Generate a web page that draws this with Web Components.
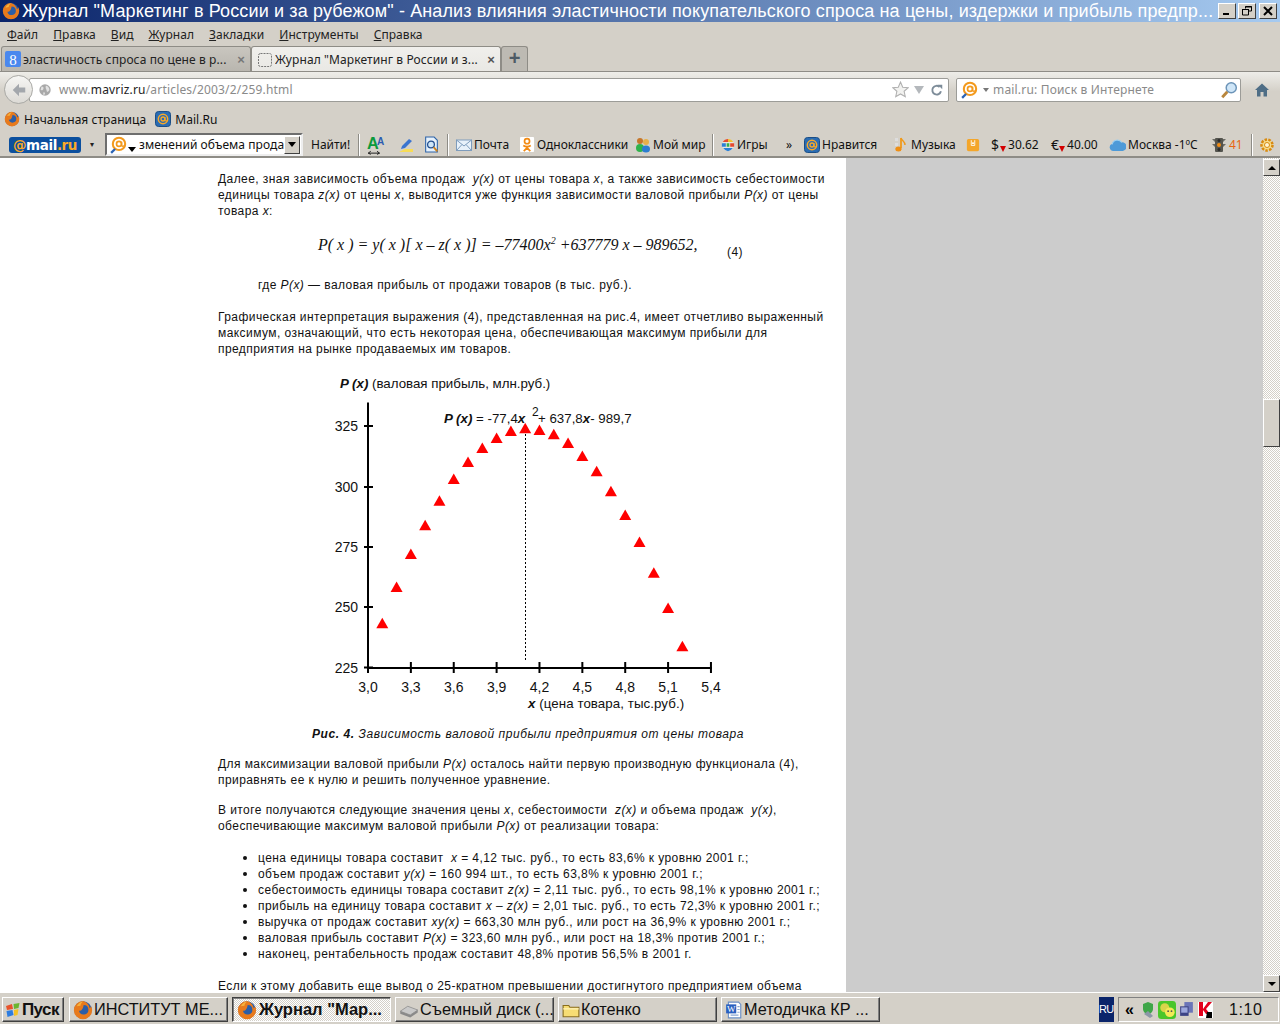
<!DOCTYPE html>
<html lang="ru">
<head>
<meta charset="utf-8">
<title>Журнал</title>
<style>
  html, body { margin: 0; height: 1024px; overflow: hidden; background: #d4d0c8; }
  body { display: flex; flex-direction: column; font-family: "Liberation Sans", Arial, sans-serif; }
</style>
</head>
<body>
<win-titlebar></win-titlebar>
<menu-bar></menu-bar>
<tab-strip></tab-strip>
<nav-bar></nav-bar>
<bookmark-bar></bookmark-bar>
<mail-toolbar></mail-toolbar>
<page-view></page-view>
<task-bar></task-bar>

<script>
const ICONS = {
  firefox: `<circle cx="8" cy="8" r="7" fill="#2b5ea8"/><path d="M8 .8a7.3 7.3 0 1 0 7.3 7.3c0-1.300-.4-2.500-1-3.400-.1 1-.5 1.500-1 1.800C13 3.900 11 1.500 8 .8zM8.500 4a3.800 3.800 0 1 1-3.700 4.600C6 9 8 8 8.500 4z" fill="#e87a1c"/><path d="M3 5c1-2 3-3.500 5-3.800C6.500 2.500 6 3.500 6 4.500z" fill="#f6b23c"/>`,
  google: `<rect x="0" y="0" width="16" height="16" rx="2" fill="#4a88ee"/><text x="8" y="13.500" font-family="Liberation Serif" font-size="15" fill="#fff" text-anchor="middle">8</text>`,
  dashed: `<rect x="1.500" y="1.500" width="13" height="13" rx="2" fill="none" stroke="#777" stroke-dasharray="2 1"/>`,
  globe: `<circle cx="8" cy="8" r="6.500" fill="#a9a9a9"/><path d="M4 4c2 0 3 1 2 3S3 8 3 8zM9 3c2 0 4 2 4 5-1 2-3 3-3 1s-2-3-1-6zM6 11c1-1 2 0 2 1l-1 2c-1 0-1-2-1-3z" fill="#e2e2e2"/>`,
  back: `<path d="M3 8l5-5v3h5v4H8v3z" fill="#a3a7ac"/>`,
  star: `<polygon points="8,1 10.100,5.800 15.300,6.300 11.400,9.700 12.500,14.800 8,12.200 3.500,14.800 4.600,9.700 .7,6.300 5.900,5.800" fill="#f2f2f0" stroke="#b0b0b0"/>`,
  reload: `<path d="M12.500 9.500A5 5 0 1 1 11 4.500" fill="none" stroke="#7d8c99" stroke-width="2.200"/><path d="M9 2h5v5z" fill="#7d8c99"/>`,
  at: `<circle cx="8" cy="7" r="5.500" fill="none" stroke="#f39a1d" stroke-width="1.800"/><circle cx="8" cy="7" r="2.200" fill="none" stroke="#f39a1d" stroke-width="1.500"/><path d="M10.300 5v3c0 1.500 2 1.500 2.800 0" fill="none" stroke="#f39a1d" stroke-width="1.300"/><path d="M4.500 11.500L1 15" stroke="#2a63b5" stroke-width="2"/>`,
  lens: `<circle cx="10" cy="6" r="4.500" fill="#cfe6f8" stroke="#6c94b8" stroke-width="1.300"/><path d="M6.500 9.500L2 14.500" stroke="#b8863c" stroke-width="2.500"/>`,
  home: `<path d="M8 1.500L1 8h2v6.500h3.500V10h3v4.500H13V8h2z" fill="#4f6e86"/>`,
  mailat: `<rect x=".5" y=".5" width="15" height="15" rx="3" fill="#2a6cb3" stroke="#1b4e86"/><circle cx="8" cy="8" r="4.700" fill="none" stroke="#f8a928" stroke-width="1.500"/><circle cx="8" cy="8" r="2" fill="none" stroke="#f8a928" stroke-width="1.300"/><path d="M10 6v3c0 1.300 1.800 1.300 2.700 0" fill="none" stroke="#f8a928" stroke-width="1.100"/>`,
  font: `<text x="0" y="11" font-family="Liberation Sans" font-weight="bold" font-size="13" fill="#0b9a3c">A</text><text x="8" y="8" font-family="Liberation Sans" font-weight="bold" font-size="8" fill="#2c5bb0">A</text><path d="M1 14.500h9M1 14.500l2-1.500M1 14.500l2 1M10 14.500l-2-1.500M10 14.500l-2 1" stroke="#222" stroke-width=".8" fill="none"/>`,
  pen: `<path d="M1 15h14v-3H7z" fill="#f7dc56"/><path d="M3 12l1-3 7-7 3 2-7 7z" fill="#3a74cf"/>`,
  doc: `<path d="M2.500 1h8l3 3v11h-11z" fill="#e6f1fb" stroke="#2d63a8"/><circle cx="7.500" cy="8" r="3.200" fill="#cfe6f8" stroke="#234f8e" stroke-width="1.200"/><path d="M10 10.500l3.500 4" stroke="#c9801f" stroke-width="1.800"/>`,
  mail: `<rect x=".5" y="3" width="15" height="10.500" fill="#e8f1fa" stroke="#7e9cbc"/><path d="M.5 3L8 9l7.500-6M.5 13.500L6 7.500M15.500 13.500L10 7.500" fill="none" stroke="#7e9cbc"/>`,
  ok: `<rect width="15" height="16" rx="1" fill="#fff"/><circle cx="7.500" cy="4.500" r="2.700" fill="none" stroke="#f28a13" stroke-width="1.800"/><path d="M3.500 9c2.500 1.600 5.500 1.600 8 0M7.500 10.500v1M4 15l3.500-3.500L11 15" fill="none" stroke="#f28a13" stroke-width="1.800"/>`,
  myworld: `<circle cx="5" cy="4" r="3" fill="#c6762a"/><circle cx="11" cy="5" r="3" fill="#e7b04a"/><ellipse cx="5" cy="11" rx="4" ry="4" fill="#2fb24b"/><ellipse cx="11" cy="12" rx="4" ry="3.500" fill="#2c7dd1"/>`,
  games: `<circle cx="8" cy="8" r="7" fill="#e7e7e0"/><path d="M8 1a7 7 0 0 0-6 3.500h6z" fill="#e4492f"/><path d="M8 1a7 7 0 0 1 6 3.500H8z" fill="#f2c02c"/><rect x="1" y="6" width="4.500" height="4" fill="#2a7fd6"/><rect x="6.500" y="6" width="3" height="4" fill="#35b04a"/><rect x="10.500" y="6" width="4.500" height="4" fill="#e4492f"/><path d="M2.500 11.500h11A7 7 0 0 1 8 15a7 7 0 0 1-5.500-3.500z" fill="#2a7fd6"/>`,
  note: `<rect x="2" y="1" width="3" height="3" fill="#ddd"/><rect x="2" y="6" width="3" height="3" fill="#ddd"/><rect x="6" y="11" width="3" height="3" fill="#ddd"/><path d="M8 1v10" stroke="#ef9a1c" stroke-width="1.800"/><path d="M8 1c1 3 4 3 4 7" stroke="#ef9a1c" stroke-width="1.500" fill="none"/><ellipse cx="5.500" cy="12" rx="3.200" ry="2.500" fill="#ef8f14"/>`,
  book: `<rect x="1" y="1" width="14" height="14" rx="2" fill="#f4a62a"/><path d="M6 2.500v6h4v-6" fill="none" stroke="#fff"/><rect x="7" y="5" width="2" height="2" fill="#fff"/>`,
  cloud: `<path d="M4 14a3.500 3.500 0 0 1-1-6.800A5 5 0 0 1 12 6a4 4 0 0 1 1 8z" fill="#4e9ad8"/><path d="M3 8a5 5 0 0 1 9-2" fill="none" stroke="#9cd0f2"/>`,
  traffic: `<rect x="4" y="1" width="8" height="14" rx="1" fill="#55554f"/><path d="M4 2H1l3 3M12 2h3l-3 3M4 7H1l3 3M12 7h3l-3 3" fill="#6b6b65"/><circle cx="8" cy="3.500" r="1.500" fill="#2b2b2b"/><circle cx="8" cy="8" r="2" fill="#f28c13"/><circle cx="8" cy="12.500" r="1.500" fill="#2b2b2b"/>`,
  gear: `<circle cx="8" cy="8" r="5.500" fill="#f6dd8c" stroke="#d98a10" stroke-width="2.500" stroke-dasharray="2.500 1.300"/><circle cx="8" cy="8" r="2.500" fill="#fff5d2" stroke="#d98a10"/>`,
  xp: `<path d="M1 4l6-2 1 5-6 1z" fill="#e8532b"/><path d="M8.500 2l6-1-1 5-4.500 1z" fill="#6bb52e"/><path d="M1.500 9l6-1 1 5-6 2z" fill="#2e7de0"/><path d="M9 8l4.500-1-1 6-3.500 1z" fill="#f6c226"/>`,
  disk: `<path d="M1 9l6-4 8 3-6 4z" fill="#c9c9c9" stroke="#888" stroke-width=".6"/><path d="M1 9v2l8 3 6-4V8L9 12z" fill="#8a8a8a"/>`,
  folder: `<path d="M1 4h5l1 1.500h8V14H1z" fill="#f7dd74" stroke="#8a6e1e"/><path d="M1 7h14" stroke="#fff5c2"/>`,
  word: `<path d="M3 1h9l2 2v12H3z" fill="#fff" stroke="#6b8fc5"/><rect x="1" y="3" width="9" height="8" fill="#2a5fc0"/><text x="5.500" y="10" font-family="Liberation Serif" font-size="8" fill="#fff" text-anchor="middle">W</text><path d="M5 12.500h7M11 5h2M11 7.500h2M11 10h2" stroke="#8aa6d2"/>`,
  shield: `<path d="M8 0l5 2v5c0 3-3 5-5 6-2-1-5-3-5-6V2z" fill="#3fa648"/><path d="M4 12l4-3 5 5-3 2z" fill="#8b97a6"/>`,
  chat: `<rect width="16" height="16" rx="3" fill="#4ac62b"/><circle cx="6" cy="6" r="4" fill="#d9d54b"/><circle cx="10.500" cy="10" r="4.300" fill="#f3ea58"/><circle cx="9" cy="9" r=".8" fill="#555"/><circle cx="12" cy="9" r=".8" fill="#555"/>`,
  net: `<rect x="6" y="1" width="8" height="10" fill="#6a74b8"/><rect x="2" y="5" width="8" height="9" fill="#3d4486"/><rect x="3" y="6" width="6" height="5" fill="#9ba6dc"/>`,
  kasper: `<rect x="1" y="0" width="15" height="16" fill="#fff"/><path d="M2 0h4v7l5-7h4l-6 7 4 5H9L6 8v6H2z" fill="#e3001b"/><path d="M10 10h5v6h-6z" fill="#000"/>`
};

class XIcon extends HTMLElement {
  connectedCallback() {
    const size = this.getAttribute('size') || 16;
    this.attachShadow({ mode: 'open' });
    this.shadowRoot.innerHTML = `
      <style>:host { display: inline-flex; flex: none; } svg { display: block; }</style>
      <svg width="${size}" height="${size}" viewBox="0 0 16 16">${ICONS[this.getAttribute('name')] || ''}</svg>`;
  }
}
customElements.define('x-icon', XIcon);

class WinTitlebar extends HTMLElement {
  connectedCallback() {
    this.attachShadow({ mode: 'open' });
    this.shadowRoot.innerHTML = `
      <style>
        :host { display: flex; flex: none; align-items: center; height: 22px; padding-left: 2px;
          background: linear-gradient(90deg, #0a246a, #a6caf0); color: #fff; }
        .t { margin-left: 2px; font: 18px/22px "Liberation Sans", sans-serif; white-space: nowrap; width: 1196px; overflow: hidden; flex: none; letter-spacing: .13px; }
        .b { flex: none; width: 16px; height: 14px; margin-right: 2px; background: #d4d0c8; border: 1px solid; border-color: #fff #404040 #404040 #fff;
          color: #000; display: flex; align-items: center; justify-content: center; }
        svg { display: block; }
      </style>
      <x-icon name="firefox" size="18"></x-icon>
      <div class="t">Журнал "Маркетинг в России и за рубежом" - Анализ влияния эластичности покупательского спроса на цены, издержки и прибыль предпр...</div>
      <div class="b"><svg width="10" height="10"><rect x="1" y="7" width="6" height="2"/></svg></div>
      <div class="b"><svg width="10" height="10"><path d="M3.500 2.500V.5h6v4.500H7M.5 3.500h6V9h-6z" fill="none" stroke="#000"/><path d="M3 1h7M0 3.500h7" stroke="#000"/></svg></div>
      <div class="b" style="margin-left:1px"><svg width="10" height="10"><path d="M1 1l8 8M9 1L1 9" stroke="#000" stroke-width="2"/></svg></div>`;
  }
}
customElements.define('win-titlebar', WinTitlebar);

class MenuBar extends HTMLElement {
  connectedCallback() {
    const items = [['Ф','айл',7],['П','равка',15],['В','ид',15],['Ж','урнал',15],['З','акладки',15],['И','нструменты',15],['С','правка',15]];
    this.attachShadow({ mode: 'open' });
    this.shadowRoot.innerHTML = `
      <style>
        :host { display: flex; flex: none; align-items: center; height: 24px; font: 12px "Noto Sans", sans-serif; letter-spacing: .05px; color: #222; }
        span { white-space: nowrap; } u { text-underline-offset: 1px; }
      </style>
      ${items.map(i => `<span style="margin-left:${i[2]}px"><u>${i[0]}</u>${i[1]}</span>`).join('')}`;
  }
}
customElements.define('menu-bar', MenuBar);

class BrowserTab extends HTMLElement {
  connectedCallback() {
    this.attachShadow({ mode: 'open' });
    this.shadowRoot.innerHTML = `
      <style>
        :host { display: flex; flex: none; align-items: center; box-sizing: border-box; width: 250px; height: 25px; padding: 0 5px 0 3px; gap: 2px;
          background: linear-gradient(#c9c6bf, #b9b6af); border: 1px solid #8e8c86; border-bottom: 0; border-radius: 3px 3px 0 0;
          font: 12px "Noto Sans", sans-serif; letter-spacing: .1px; color: #222; }
        :host([active]) { background: linear-gradient(#f0efec, #e9e8e4); height: 26px; padding-left: 5px; }
        .l { flex: 1; white-space: nowrap; overflow: hidden; min-width: 0; }
        .x { font: bold 13px "Liberation Sans", sans-serif; color: #777; margin-left: 3px; }
        :host([active]) .x { color: #555; }
      </style>
      <slot name="icon"></slot><span class="l"><slot></slot></span><span class="x">×</span>`;
  }
}
customElements.define('browser-tab', BrowserTab);

class TabStrip extends HTMLElement {
  connectedCallback() {
    this.attachShadow({ mode: 'open' });
    this.shadowRoot.innerHTML = `
      <style>
        :host { display: flex; flex: none; align-items: flex-start; height: 25px; padding-left: 1px; }
        .plus { box-sizing: border-box; width: 27px; height: 25px; background: #bdbab3; border: 1px solid #8e8c86; border-bottom: 0;
          border-radius: 3px 3px 0 0; font: bold 20px/22px "Liberation Sans", sans-serif; color: #4e5b66; text-align: center; }
      </style>
      <browser-tab><x-icon slot="icon" name="google" size="16"></x-icon>эластичность спроса по цене в р...</browser-tab>
      <browser-tab active><x-icon slot="icon" name="dashed" size="16"></x-icon>Журнал "Маркетинг в России и з...</browser-tab>
      <div class="plus">+</div>`;
  }
}
customElements.define('tab-strip', TabStrip);

class NavBar extends HTMLElement {
  connectedCallback() {
    this.attachShadow({ mode: 'open' });
    this.shadowRoot.innerHTML = `
      <style>
        :host { display: flex; flex: none; align-items: center; height: 36px; padding-left: 4px; box-sizing: border-box;
          border-top: 1px solid #8e8c86; background: linear-gradient(#eeede9, #d4d0c8 55%); font: 12px "Noto Sans", sans-serif; letter-spacing: .18px; color: #8a8a8a; }
        .back { position: relative; z-index: 1; flex: none; box-sizing: border-box; width: 29px; height: 29px; border-radius: 50%; border: 1px solid #a9a9a5;
          background: linear-gradient(#f6f6f4, #dcdad5); display: flex; align-items: center; justify-content: center; }
        .field { box-sizing: border-box; height: 24px; background: #fff; border: 1px solid #9c9c98; border-radius: 2px; display: flex; align-items: center; flex: none; }
        .url { width: 920px; margin-left: -4px; padding: 0 4px 0 8px; }
        .url b { font-weight: 400; color: #222; }
        .grow { flex: 1; margin-left: 7px; white-space: nowrap; }
        .tri { width: 0; height: 0; border: 5px solid transparent; border-top: 8px solid #b4b8bc; border-bottom: 0; margin: 0 6px 0 5px; }
        .search { width: 285px; margin-left: 7px; padding: 0 2px 0 4px; }
        .mini { width: 0; height: 0; border: 3px solid transparent; border-top: 4px solid #777; border-bottom: 0; margin: 0 4px 0 4px; }
        .home { margin-left: 13px; }
      </style>
      <div class="back"><x-icon name="back" size="20"></x-icon></div>
      <div class="field url"><x-icon name="globe" size="14"></x-icon>
        <span class="grow">www.<b>mavriz.ru</b>/articles/2003/2/259.html</span>
        <x-icon name="star" size="17"></x-icon><span class="tri"></span><x-icon name="reload" size="14"></x-icon></div>
      <div class="field search"><x-icon name="at" size="18"></x-icon><span class="mini"></span>
        <span style="flex:1;white-space:nowrap">mail.ru: Поиск в Интернете</span><x-icon name="lens" size="18"></x-icon></div>
      <x-icon class="home" name="home" size="16"></x-icon>`;
  }
}
customElements.define('nav-bar', NavBar);

class BookmarkBar extends HTMLElement {
  connectedCallback() {
    this.attachShadow({ mode: 'open' });
    this.shadowRoot.innerHTML = `
      <style>
        :host { display: flex; flex: none; align-items: center; height: 24px; padding-left: 4px; font: 12px "Noto Sans", sans-serif; letter-spacing: .05px; color: #111; }
        span { margin: 0 9px 0 4px; white-space: nowrap; }
      </style>
      <x-icon name="firefox" size="16"></x-icon><span>Начальная страница</span>
      <x-icon name="mailat" size="16"></x-icon><span>Mail.Ru</span>`;
  }
}
customElements.define('bookmark-bar', BookmarkBar);

class ToolItem extends HTMLElement {
  connectedCallback() {
    this.attachShadow({ mode: 'open' });
    this.shadowRoot.innerHTML = `
      <style>
        :host { display: flex; flex: none; align-items: center; gap: 2px; white-space: nowrap; height: 22px; font: 12px "Noto Sans", sans-serif; color: #111; }
      </style>
      <slot name="icon"></slot><slot></slot>`;
  }
}
customElements.define('tool-item', ToolItem);

class MailToolbar extends HTMLElement {
  connectedCallback() {
    const tri = '<span class="down"></span>';
    this.attachShadow({ mode: 'open' });
    this.shadowRoot.innerHTML = `
      <style>
        :host { display: flex; flex: none; align-items: center; box-sizing: border-box; height: 27px; padding: 2px 0 0 9px; border-bottom: 2px solid #8e8c86; }
        .logo { flex: none; width: 72px; height: 16px; border-radius: 3px; background: #0b4f9e; color: #fff; font: bold 13.5px/16px "DejaVu Sans", sans-serif; text-align: center; letter-spacing: -.4px; }
        .logo i { font-style: normal; color: #f8a928; }
        .dot { flex: none; width: 24px; text-align: center; font: 8px "Liberation Sans", sans-serif; color: #222; padding-right: 2px; box-sizing: border-box; }
        .combo { flex: none; box-sizing: border-box; width: 198px; height: 23px; background: #fff; border: 2px solid; border-color: #6e6e6e #eee #eee #6e6e6e; display: flex; align-items: center; padding-left: 3px; font: 12px "Noto Sans", sans-serif; letter-spacing: .06px; color: #111; white-space: nowrap; overflow: hidden; }
        .combo .txt { flex: 1; min-width: 0; overflow: hidden; }
        .btn { flex: none; box-sizing: border-box; width: 16px; height: 18px; background: #d4d0c8; border: 1px solid; border-color: #fff #404040 #404040 #fff; display: flex; align-items: center; justify-content: center; margin-right: 1px; }
        .down { display: inline-block; flex: none; width: 0; height: 0; border: 4px solid transparent; border-top: 5px solid #000; border-bottom: 0; }
        .sep { flex: none; width: 1px; height: 22px; background: #8e8c86; box-shadow: 1px 0 #fff; }
      </style>
      <div class="logo"><i>@</i>mail<i>.ru</i></div>
      <div class="dot">▾</div>
      <div class="combo"><x-icon name="at" size="18"></x-icon><span class="down" style="margin:9px 3px 0 0"></span><span class="txt">зменений объема прода</span><div class="btn">${tri}</div></div>
      <tool-item style="width:47px;margin-left:8px">Найти!</tool-item>
      <div class="sep" style="margin-right:8px"></div>
      <tool-item style="width:31px"><x-icon slot="icon" name="font" size="20"></x-icon></tool-item>
      <tool-item style="width:25px"><x-icon slot="icon" name="pen" size="16"></x-icon></tool-item>
      <tool-item style="width:24px"><x-icon slot="icon" name="doc" size="17"></x-icon></tool-item>
      <div class="sep" style="margin-right:8px"></div>
      <tool-item style="width:64px"><x-icon slot="icon" name="mail" size="16"></x-icon>Почта</tool-item>
      <tool-item style="width:115px"><x-icon slot="icon" name="ok" size="15"></x-icon>Одноклассники</tool-item>
      <tool-item style="width:77px"><x-icon slot="icon" name="myworld" size="16"></x-icon>Мой мир</tool-item>
      <div class="sep" style="margin-right:8px"></div>
      <tool-item style="width:65px"><x-icon slot="icon" name="games" size="14"></x-icon>Игры</tool-item>
      <tool-item style="width:18px">»</tool-item>
      <tool-item style="width:89px"><x-icon slot="icon" name="mailat" size="16"></x-icon>Нравится</tool-item>
      <tool-item style="width:73px"><x-icon slot="icon" name="note" size="16"></x-icon>Музыка</tool-item>
      <tool-item style="width:25px"><x-icon slot="icon" name="book" size="14"></x-icon></tool-item>
      <tool-item style="width:60px;gap:0"><span slot="icon" style="font-size:14px">$</span><span slot="icon" style="width:0;height:0;border:3px solid transparent;border-top:6px solid #d40000;border-bottom:0;margin:8px 2px 0 1px"></span>30.62</tool-item>
      <tool-item style="width:58px;gap:0"><span slot="icon" style="font-size:14px">€</span><span slot="icon" style="width:0;height:0;border:3px solid transparent;border-top:6px solid #d40000;border-bottom:0;margin:8px 2px 0 0"></span>40.00</tool-item>
      <tool-item style="width:102px"><x-icon slot="icon" name="cloud" size="17"></x-icon>Москва -1ºC</tool-item>
      <tool-item style="width:40px;color:#e8660f"><x-icon slot="icon" name="traffic" size="16"></x-icon>41</tool-item>
      <div class="sep" style="margin-right:7px"></div>
      <x-icon name="gear" size="16"></x-icon>`;
  }
}
customElements.define('mail-toolbar', MailToolbar);

class ProfitChart extends HTMLElement {
  connectedCallback() {
    const ox = 320, oy = 370;
    const ys = [760,651,552,466,392,327,276,234,204,183,175,180,193,219,258,304,364,435,516,608,714,829];
    const tris = ys.map((y, i) => {
      const cx = 368 + (i + 1) * 14.29, cy = oy + y / 3;
      return `<polygon points="${cx},${cy - 5.5} ${cx + 6},${cy + 5} ${cx - 6},${cy + 5}" fill="#ff0000"/>`;
    }).join('');
    const yTicks = [[325,426],[300,487],[275,547],[250,607],[225,667.500]];
    const xLabels = ['3,0','3,3','3,6','3,9','4,2','4,5','4,8','5,1','5,4'];
    let ticks = '';
    yTicks.forEach(t => {
      ticks += `<path d="M368 ${t[1]}h-4M368 ${t[1]}h5" stroke="#000" stroke-width="2"/><text class="n" x="358" y="${t[1] + 5}" text-anchor="end">${t[0]}</text>`;
    });
    xLabels.forEach((l, i) => {
      const x = 368 + i * 42.87;
      ticks += `<path d="M${x} 667v6M${x} 667v-5" stroke="#000" stroke-width="2"/><text class="n" x="${x}" y="692" text-anchor="middle">${l}</text>`;
    });
    this.attachShadow({ mode: 'open' });
    this.shadowRoot.innerHTML = `
      <style>
        :host { display: block; width: 420px; height: 350px; margin-left: 102px; letter-spacing: 0; }
        svg { display: block; font: 13.300px "Liberation Sans", sans-serif; fill: #111; }
        .b { font-weight: bold; font-style: italic; }
        .n { font-size: 14px; }
      </style>
      <svg width="420" height="350" viewBox="${ox} ${oy} 420 350">
        <text x="340" y="388"><tspan class="b">P (x)</tspan> (валовая прибыль, млн.руб.)</text>
        <path d="M368 402.500V668H712" fill="none" stroke="#000" stroke-width="2"/>
        ${ticks}
        <path d="M525.500 434V661" stroke="#000" stroke-dasharray="2 2"/>
        <text x="444" y="423"><tspan class="b">P (x)</tspan> = -77,4<tspan class="b">x</tspan></text>
        <text x="532" y="416" font-size="12">2</text>
        <text x="538" y="423">+ 637,8<tspan class="b">x</tspan>- 989,7</text>
        ${tris}
        <text x="528" y="708" letter-spacing=".07"><tspan class="b">x</tspan>  (цена товара, тыс.руб.)</text>
      </svg>`;
  }
}
customElements.define('profit-chart', ProfitChart);

class PageArticle extends HTMLElement {
  connectedCallback() {
    const li = [
      'цена единицы товара составит &nbsp;<i>x</i> = 4,12 тыс. руб., то есть 83,6% к уровню 2001 г.;',
      'объем продаж составит <i>y(x)</i> = 160 994 шт., то есть 63,8% к уровню 2001 г.;',
      'себестоимость единицы товара составит <i>z(x)</i> = 2,11 тыс. руб., то есть 98,1% к уровню 2001 г.;',
      'прибыль на единицу товара составит <i>x</i> – <i>z(x)</i> = 2,01 тыс. руб., то есть 72,3% к уровню 2001 г.;',
      'выручка от продаж составит <i>xy(x)</i> = 663,30 млн руб., или рост на 36,9% к уровню 2001 г.;',
      'валовая прибыль составит <i>P(x)</i> = 323,60 млн руб., или рост на 18,3% против 2001 г.;',
      'наконец, рентабельность продаж составит 48,8% против 56,5% в 2001 г.'
    ];
    this.attachShadow({ mode: 'open' });
    this.shadowRoot.innerHTML = `
      <style>
        :host { display: block; flex: none; box-sizing: border-box; width: 846px; height: 100%; overflow: hidden; background: #fff; padding: 13px 0 0 218px;
          font: 12px/16px "Liberation Sans", sans-serif; color: #111; white-space: nowrap; letter-spacing: .43px; }
        p { margin: 0 0 16px; }
        .formula { display: flex; align-items: center; height: 42px; margin: -16px 0 16px; padding-top: 10px; box-sizing: border-box; }
        .formula i { margin-left: 100px; width: 409px; font: italic 16px "Liberation Serif", serif; letter-spacing: 0; flex: none; }
        .formula sup { font-size: 10px; line-height: 0; }
        .indent { margin-left: 40px; }
        .cap { margin: 6px 0 14px; padding-left: 94px; font-style: italic; letter-spacing: .56px; }
        ul { margin: 0 0 16px; padding: 0 0 0 40px; }
        li::marker { font-size: 13px; }
      </style>
      <p>Далее, зная зависимость объема продаж &nbsp;<i>y(x)</i> от цены товара <i>x</i>, а также зависимость себестоимости<br>
      единицы товара <i>z(x)</i> от цены <i>x</i>, выводится уже функция зависимости валовой прибыли <i>P(x)</i> от цены<br>
      товара <i>x</i>:</p>
      <div class="formula"><i>P( x ) = y( x )[ x – z( x )] = –77400x<sup>2</sup> +637779 x – 989652,</i><span style="margin-top:14px">(4)</span></div>
      <p class="indent">где <i>P(x)</i> — валовая прибыль от продажи товаров (в тыс. руб.).</p>
      <p>Графическая интерпретация выражения (4), представленная на рис.4, имеет отчетливо выраженный<br>
      максимум, означающий, что есть некоторая цена, обеспечивающая максимум прибыли для<br>
      предприятия на рынке продаваемых им товаров.</p>
      <profit-chart style="margin-top:-3px"></profit-chart>
      <p class="cap"><b>Рис. 4.</b> Зависимость валовой прибыли предприятия от цены товара</p>
      <p style="margin-bottom:14px">Для максимизации валовой прибыли <i>P(x)</i> осталось найти первую производную функционала (4),<br>
      приравнять ее к нулю и решить полученное уравнение.</p>
      <p>В итоге получаются следующие значения цены <i>x</i>, себестоимости &nbsp;<i>z(x)</i> и объема продаж &nbsp;<i>y(x)</i>,<br>
      обеспечивающие максимум валовой прибыли <i>P(x)</i> от реализации товара:</p>
      <ul>${li.map(t => `<li>${t}</li>`).join('')}</ul>
      <p>Если к этому добавить еще вывод о 25-кратном превышении достигнутого предприятием объема</p>`;
  }
}
customElements.define('page-article', PageArticle);

class VScrollbar extends HTMLElement {
  connectedCallback() {
    this.attachShadow({ mode: 'open' });
    this.shadowRoot.innerHTML = `
      <style>
        :host { display: flex; flex-direction: column; flex: none; width: 17px; height: 100%; box-sizing: border-box; padding-top: 1px;
          background: repeating-conic-gradient(#d4d0c8 0 25%, #fff 0 50%) 0 0 / 2px 2px; }
        .b { flex: none; box-sizing: border-box; width: 17px; height: 17px; background: #d4d0c8; border: 1px solid; border-color: #fff #404040 #404040 #fff;
          display: flex; align-items: center; justify-content: center; }
        .up { width: 0; height: 0; border: 4px solid transparent; border-bottom: 4px solid #000; border-top: 0; }
        .dn { width: 0; height: 0; border: 4px solid transparent; border-top: 4px solid #000; border-bottom: 0; }
        .thumb { flex: none; box-sizing: border-box; width: 17px; height: 48px; margin-top: 223px; background: #d4d0c8; border: 1px solid; border-color: #fff #404040 #404040 #fff; }
        .fill { flex: 1; }
      </style>
      <div class="b"><span class="up"></span></div>
      <div class="thumb"></div>
      <div class="fill"></div>
      <div class="b"><span class="dn"></span></div>`;
  }
}
customElements.define('v-scrollbar', VScrollbar);

class PageView extends HTMLElement {
  connectedCallback() {
    this.attachShadow({ mode: 'open' });
    this.shadowRoot.innerHTML = `
      <style>
        :host { display: flex; flex: none; height: 834px; background: #cccccc; }
        .rest { flex: 1; }
      </style>
      <page-article></page-article>
      <div class="rest"></div>
      <v-scrollbar></v-scrollbar>`;
  }
}
customElements.define('page-view', PageView);

class TaskButton extends HTMLElement {
  connectedCallback() {
    this.attachShadow({ mode: 'open' });
    this.shadowRoot.innerHTML = `
      <style>
        :host { display: flex; flex: none; align-items: center; box-sizing: border-box; width: 159px; height: 25px; margin-right: 4px; padding-left: 3px; gap: 1px;
          background: #d4d0c8; border: 1px solid; border-color: #fff #404040 #404040 #fff; box-shadow: inset -1px -1px #808080;
          font: 16.300px "Liberation Sans", sans-serif; color: #111; white-space: nowrap; overflow: hidden; }
        :host([active]) { border-color: #404040 #fff #fff #404040; box-shadow: inset 1px 1px #808080; font-weight: bold; font-size: 16.500px; padding-left: 4px; gap: 2px;
          background: repeating-conic-gradient(#d4d0c8 0 25%, #fff 0 50%) 0 0 / 2px 2px; }
      </style>
      <slot name="icon"></slot><slot></slot>`;
  }
}
customElements.define('task-button', TaskButton);

class TaskBar extends HTMLElement {
  connectedCallback() {
    this.attachShadow({ mode: 'open' });
    this.shadowRoot.innerHTML = `
      <style>
        :host { display: flex; flex: none; align-items: center; box-sizing: border-box; height: 32px; padding: 2px 0 0 2px; background: #d4d0c8; border-top: 1px solid #fff; }
        .lang { flex: none; box-sizing: border-box; width: 15px; height: 25px; margin-left: 219px; background: #0a246a; color: #fff; font: 11px/25px "Liberation Sans", sans-serif; letter-spacing: -.6px; }
        .tray { flex: none; box-sizing: border-box; display: flex; align-items: center; width: 161px; height: 25px; margin-left: 4px; padding-left: 6px; gap: 2px; border: 1px solid; border-color: #808080 #fff #fff #808080; }
        .clock { margin-left: 14px; font: 16px "Liberation Sans", sans-serif; color: #111; letter-spacing: .6px; }
        .chev { font: bold 16px "Liberation Sans", sans-serif; margin-right: 4px; }
      </style>
      <task-button style="width:62px;margin-right:5px;padding-left:2px;font-weight:bold;font-size:17px;letter-spacing:-.6px"><x-icon slot="icon" name="xp" size="16"></x-icon>Пуск</task-button>
      <task-button><x-icon slot="icon" name="firefox" size="20"></x-icon>ИНСТИТУТ МЕ...</task-button>
      <task-button active><x-icon slot="icon" name="firefox" size="20"></x-icon>Журнал "Мар...</task-button>
      <task-button><x-icon slot="icon" name="disk" size="20"></x-icon>Съемный диск (...</task-button>
      <task-button><x-icon slot="icon" name="folder" size="18"></x-icon>Котенко</task-button>
      <task-button style="margin-right:0"><x-icon slot="icon" name="word" size="18"></x-icon>Методичка КР ...</task-button>
      <div class="lang">RU</div>
      <div class="tray"><span class="chev">«</span><x-icon name="shield" size="16"></x-icon><x-icon name="chat" size="18"></x-icon><x-icon name="net" size="17"></x-icon><x-icon name="kasper" size="16"></x-icon><span class="clock">1:10</span></div>`;
  }
}
customElements.define('task-bar', TaskBar);
</script>
</body>
</html>
